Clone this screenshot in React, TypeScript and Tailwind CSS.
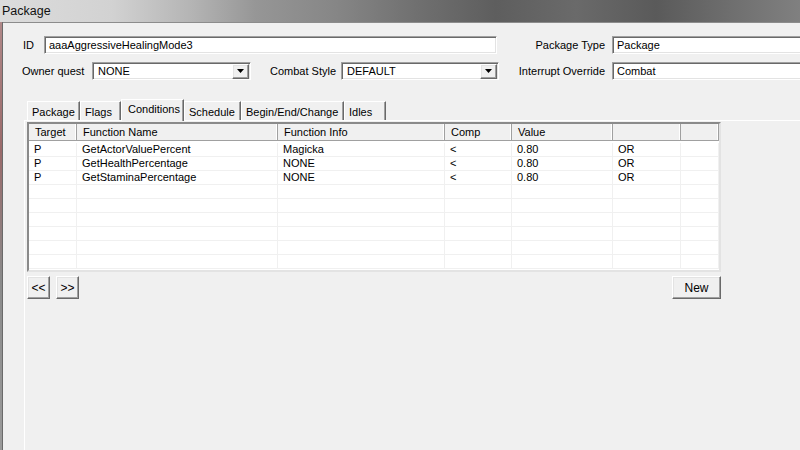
import type { ReactNode } from "react";

type Row = { target: string; name: string; info: string; comp: string; value: string; op: string };

const rows: Row[] = [
  { target: "P", name: "GetActorValuePercent", info: "Magicka", comp: "<", value: "0.80", op: "OR" },
  { target: "P", name: "GetHealthPercentage", info: "NONE", comp: "<", value: "0.80", op: "OR" },
  { target: "P", name: "GetStaminaPercentage", info: "NONE", comp: "<", value: "0.80", op: "OR" },
];

/** Anchos de columna de la lista (px). */
const cols = [48, 201, 167, 67, 101, 68, 38];
const heads = ["Target", "Function Name", "Function Info", "Comp", "Value", "", ""];

const sunken =
  "border border-t-[#a0a0a0] border-l-[#a0a0a0] border-r-white border-b-white shadow-[inset_1px_1px_0_#696969,inset_-1px_-1px_0_#e3e3e3]";
const raised =
  "border border-t-white border-l-white border-r-[#696969] border-b-[#696969] shadow-[inset_-1px_-1px_0_#a0a0a0,inset_1px_1px_0_#e3e3e3]";

function Field({ w, children }: { w: string; children?: ReactNode }) {
  return (
    <div className={`${w} h-[18px] bg-white ${sunken} flex items-center pl-[4px] overflow-hidden whitespace-nowrap`}>
      {children}
    </div>
  );
}

function Combo({ w, value }: { w: string; value: string }) {
  return (
    <div className={`${w} h-[18px] bg-white ${sunken} flex items-center justify-between pl-[5px] pr-px`}>
      <span>{value}</span>
      <div className={`w-[17px] h-[15px] bg-[#f0f0f0] ${raised} flex items-center justify-center`}>
        <svg width="7" height="4" viewBox="0 0 7 4">
          <path d="M0 0h7L3.5 4z" fill="#000" />
        </svg>
      </div>
    </div>
  );
}

function Tab({ w, label, active }: { w: string; label: string; active?: boolean }) {
  if (active) {
    return (
      <div
        className={`${w} h-[22px] -mb-px relative z-10 bg-[#f0f0f0] border-t border-l border-white border-r border-r-[#696969] shadow-[inset_-1px_0_0_#a0a0a0] pl-[6px] pt-[4px] whitespace-nowrap`}
      >
        {label}
      </div>
    );
  }
  return (
    <div
      className={`${w} h-[19px] bg-[#f0f0f0] border-t border-l border-white border-r border-r-[#696969] shadow-[inset_-1px_0_0_#a0a0a0] pl-[4px] pt-[5px] whitespace-nowrap`}
    >
      {label}
    </div>
  );
}

function Btn({ w, label }: { w: string; label: string }) {
  return (
    <div className={`${w} h-[23px] bg-[#f0f0f0] ${raised} flex items-center justify-center text-[12px]`}>
      {label}
    </div>
  );
}

export default function App() {
  const empty = 9 - rows.length;
  return (
    <div className="w-[800px] h-[450px] overflow-hidden bg-[#f0f0f0] text-black text-[11px] leading-none font-['Liberation_Sans',Arial,sans-serif] flex flex-col">
      {/* Barra de título */}
      <div className="h-[22px] shrink-0 bg-[linear-gradient(to_right,#dcdcdc_0%,#d2d2d2_14%,#b4b4b4_24%,#969696_32%,#868686_42%,#707070_52%,#5e5e5e_62%,#6a6a6a_72%,#5a5a5a_82%,#707070_92%,#808080_100%)] flex items-center pl-[2px] text-[12.5px] text-[#111]">
        Package
      </div>

      <div className="flex flex-1 min-h-0">
        <div className="w-[3px] shrink-0 bg-[linear-gradient(to_bottom,#b08888,#9a6a6a_30%,#8a8a8a_60%,#9a9a9a)] border-r border-r-[#6a6a6a]" />

        {/* Área cliente */}
        <div className="flex-1 border-t border-t-[#8c8c8c] flex flex-col">
          <div className="mt-[13px] flex items-center h-[18px] pl-[20px]">
            <span className="w-[21px]">ID</span>
            <Field w="w-[453px]">aaaAggressiveHealingMode3</Field>
            <span className="w-[108px] text-right whitespace-nowrap">Package Type</span>
            <div className="ml-[7px]">
              <Field w="w-[200px]">Package</Field>
            </div>
          </div>

          <div className="mt-[8px] flex items-center h-[18px] pl-[19px]">
            <span className="w-[70px] whitespace-nowrap">Owner quest</span>
            <Combo w="w-[159px]" value="NONE" />
            <span className="ml-[19px] w-[71px] whitespace-nowrap">Combat Style</span>
            <Combo w="w-[158px]" value="DEFAULT" />
            <span className="w-[106px] text-right whitespace-nowrap">Interrupt Override</span>
            <div className="ml-[7px]">
              <Field w="w-[200px]">Combat</Field>
            </div>
          </div>

          {/* Pestañas */}
          <div className="mt-[19px] h-[21px] flex items-end pl-[24px]">
            <Tab w="w-[53px]" label="Package" />
            <Tab w="w-[41px]" label="Flags" />
            <Tab w="w-[63px]" label="Conditions" active />
            <Tab w="w-[57px]" label="Schedule" />
            <Tab w="w-[103px]" label="Begin/End/Change" />
            <Tab w="w-[42px]" label="Idles" />
          </div>

          <div className="flex-1 ml-[21px] border-t border-l border-white pl-[2px] pt-px">
            {/* Lista de condiciones */}
            <div className="w-[694px] h-[150px] bg-white border-2 border-t-[#8a8a8a] border-l-[#8a8a8a] border-r-[#e3e3e3] border-b-[#e3e3e3] overflow-hidden">
              <div className="flex h-[17px] bg-[#f0f0f0] border-b border-b-[#a0a0a0]">
                {cols.map((w, i) => (
                  <div
                    key={i}
                    style={{ width: w }}
                    className="h-full border-r border-r-[#a0a0a0] shadow-[inset_-1px_0_0_#fff] flex items-center pl-[6px] shrink-0"
                  >
                    {heads[i]}
                  </div>
                ))}
              </div>
              <div className="pt-[2px]">
                {rows.map((r, j) => {
                  const cells = [r.target, r.name, r.info, r.comp, r.value, r.op, ""];
                  return (
                    <div key={j} className="flex h-[14px] border-b border-b-[#f0f0f0]">
                      {cells.map((c, i) => (
                        <div
                          key={i}
                          style={{ width: cols[i] }}
                          className="h-full border-r border-r-[#f0f0f0] flex items-center pl-[5px] shrink-0"
                        >
                          {c}
                        </div>
                      ))}
                    </div>
                  );
                })}
                {Array.from({ length: empty }).map((_, j) => (
                  <div key={"e" + j} className="flex h-[14px] border-b border-b-[#f0f0f0]">
                    {cols.map((w, i) => (
                      <div key={i} style={{ width: w }} className="h-full border-r border-r-[#f0f0f0] shrink-0" />
                    ))}
                  </div>
                ))}
              </div>
            </div>

            <div className="w-[694px] mt-[4px] flex">
              <Btn w="w-[23px]" label="<<" />
              <div className="ml-[6px]">
                <Btn w="w-[23px]" label=">>" />
              </div>
              <div className="ml-auto">
                <Btn w="w-[49px]" label="New" />
              </div>
            </div>
          </div>
        </div>
      </div>
    </div>
  );
}
